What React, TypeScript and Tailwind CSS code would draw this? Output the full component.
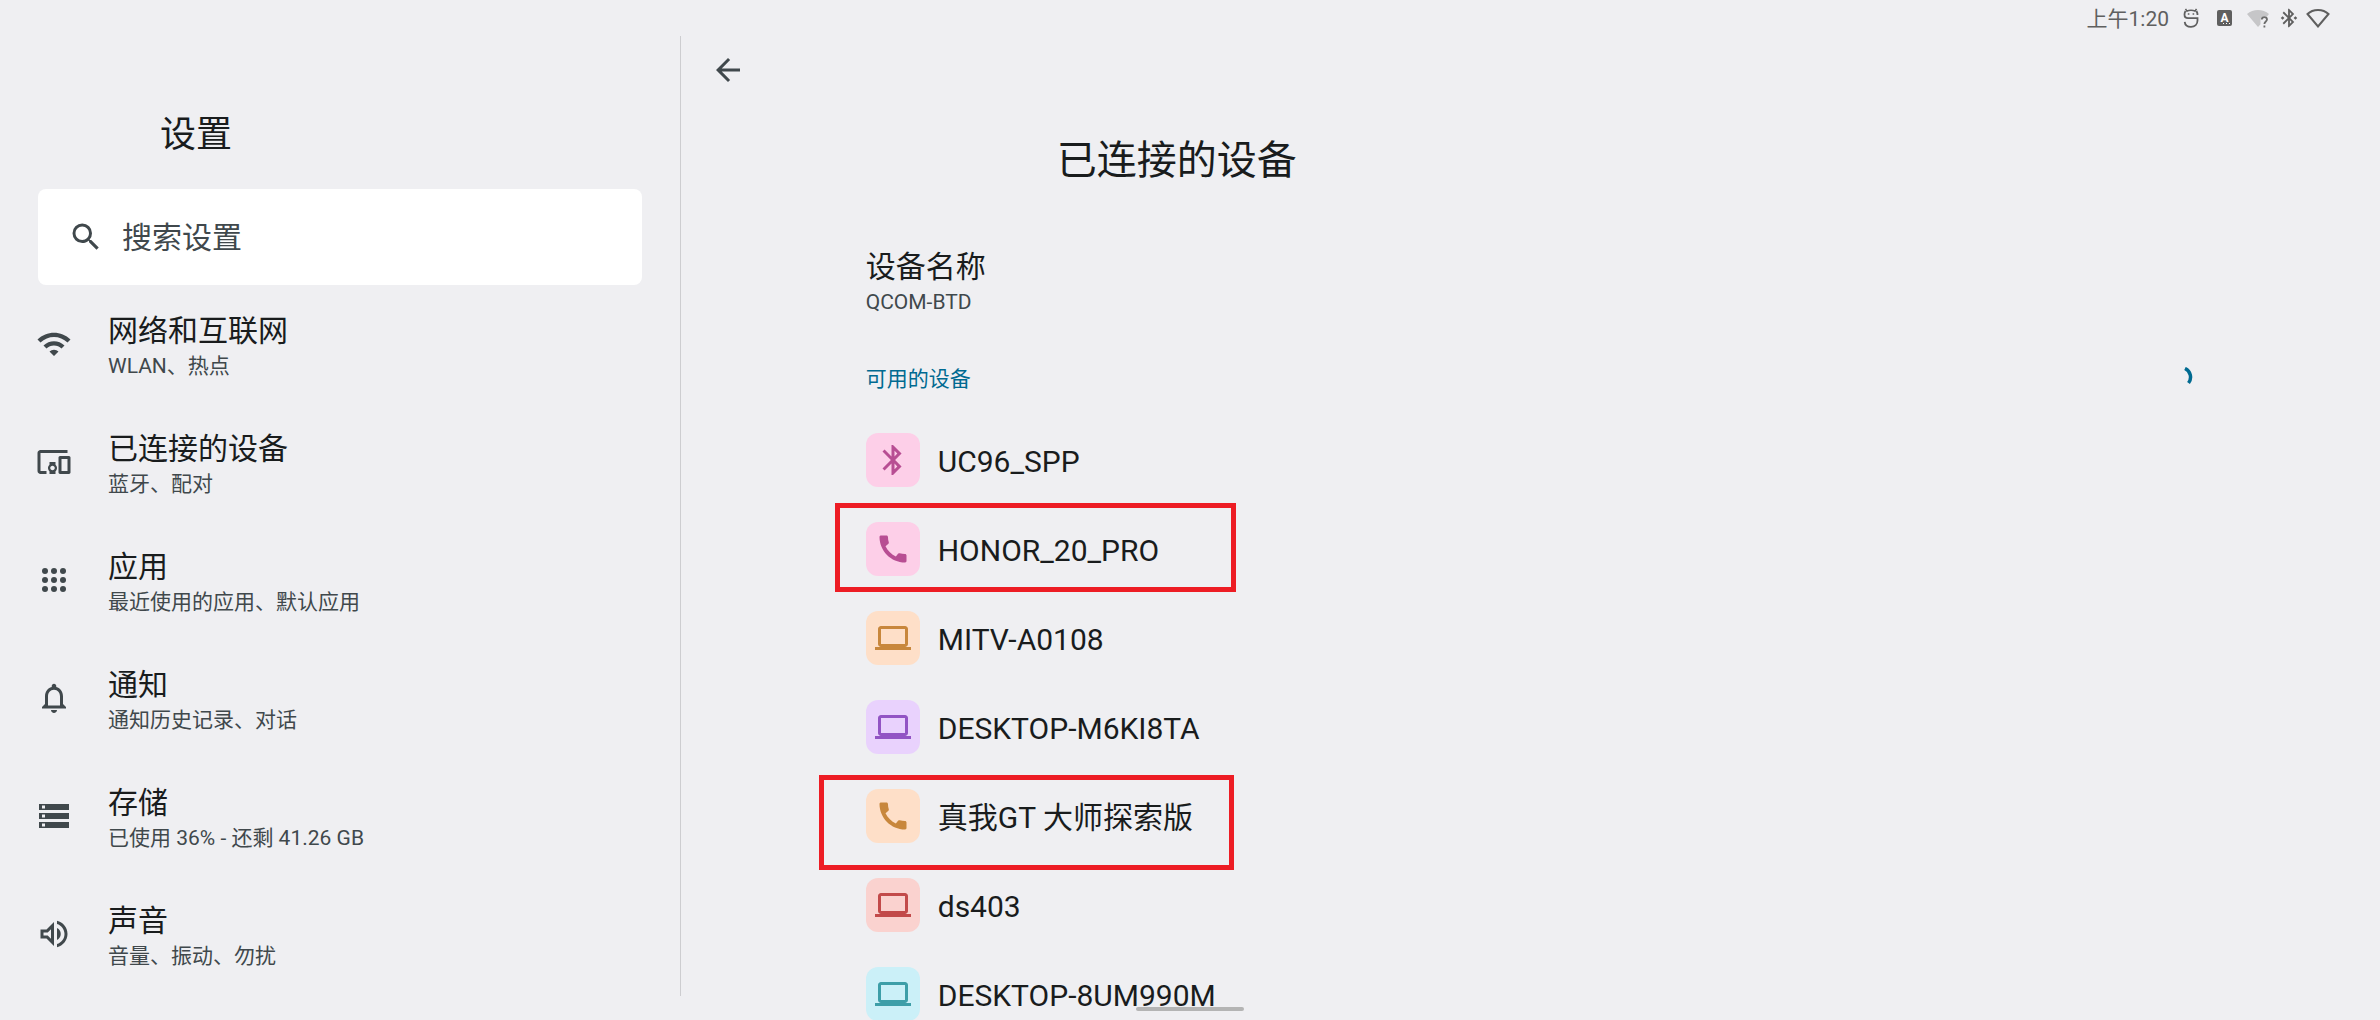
import React from 'react';
import {
  MdArrowBack,
  MdBluetooth,
  MdBluetoothConnected,
  MdCall,
  MdDevicesOther,
  MdNotificationsNone,
  MdOutlineLaptop,
  MdOutlineVolumeUp,
  MdSearch,
  MdStorage,
  MdWifi,
} from 'react-icons/md';

interface SettingItem {
  title: string;
  summary: string;
  icon: React.ReactNode;
  active?: boolean;
}

interface Device {
  name: string;
  icon: React.ReactNode;
  color: string;
  // position and size of the highlight frame, relative to the row
  frame?: string;
}

const AppsIcon = () => (
  <svg viewBox="0 0 24 24" className="size-9" fill="currentColor" aria-hidden="true">
    {[6, 12, 18].map((y) =>
      [6, 12, 18].map((x) => <circle key={`${x}-${y}`} cx={x} cy={y} r="2" />)
    )}
  </svg>
);

const settings: SettingItem[] = [
  { title: '网络和互联网', summary: 'WLAN、热点', icon: <MdWifi className="size-9" /> },
  { title: '已连接的设备', summary: '蓝牙、配对', icon: <MdDevicesOther className="size-9" />, active: true },
  { title: '应用', summary: '最近使用的应用、默认应用', icon: <AppsIcon /> },
  { title: '通知', summary: '通知历史记录、对话', icon: <MdNotificationsNone className="size-9" /> },
  { title: '存储', summary: '已使用 36% - 还剩 41.26 GB', icon: <MdStorage className="size-9" /> },
  { title: '声音', summary: '音量、振动、勿扰', icon: <MdOutlineVolumeUp className="size-9" /> },
];

const laptop = <MdOutlineLaptop className="size-9" />;
const phone = <MdCall className="size-9" />;

const devices: Device[] = [
  { name: 'UC96_SPP', icon: <MdBluetooth className="size-9" />, color: 'bg-[#fdcfe8] text-[#b84e93]' },
  {
    name: 'HONOR_20_PRO',
    icon: phone,
    color: 'bg-[#fdcfe8] text-[#b84e93]',
    frame: '-left-[31px] -top-px h-[89px] w-[401px]',
  },
  { name: 'MITV-A0108', icon: laptop, color: 'bg-[#fedfc8] text-[#c8873c]' },
  { name: 'DESKTOP-M6KI8TA', icon: laptop, color: 'bg-[#e9d2fd] text-[#9254c4]' },
  {
    name: '真我GT 大师探索版',
    icon: phone,
    color: 'bg-[#fedfc8] text-[#c8873c]',
    frame: '-left-[47px] top-1 h-[95px] w-[415px]',
  },
  { name: 'ds403', icon: laptop, color: 'bg-[#fad2cf] text-[#c24a4a]' },
  { name: 'DESKTOP-8UM990M', icon: laptop, color: 'bg-[#cbf0f8] text-[#3d9ea8]' },
];

const StatusBar: React.FC = () => (
  <header className="flex h-9 items-center justify-end pr-[50px] text-[#5f5f5f]">
    <span className="pt-0.5 text-[21px] leading-9">上午1:20</span>
    <svg viewBox="0 0 16 20" className="ml-3.5 h-5 w-4" fill="none" stroke="currentColor" aria-hidden="true">
      <path
        d="M2.500 3C1.800 4.200 1.500 5.500 1.500 6.500c0 2.500 1.500 3.700 3.500 3.700h9.500v2.300c0 3.800-2.700 6.300-6.500 6.300-3.600 0-6-2-6.300-5M13.500 3c.7 1.200 1 2.500 1 4"
        strokeWidth="1.800"
      />
      <path d="M2.500 .8l1.500 2.400c2-1.200 6-1.200 8 0L13.500 .8" strokeWidth="1.500" />
      <path d="M4.800 6h1.600M9.600 6h1.600" strokeWidth="1.600" />
    </svg>
    <div className="relative ml-[18px] flex h-4 w-[15px] items-center justify-center rounded-xs bg-[#5f5f5f] text-xs leading-4 font-bold text-white">
      A
      <svg viewBox="0 0 8 2" className="absolute right-0.5 bottom-px h-0.5 w-2" fill="currentColor" aria-hidden="true">
        <path d="M1 0h1v1H1zM4 0h1v1H4zM7 0h1v1H7z" />
      </svg>
    </div>
    <svg viewBox="0 0 22 19" className="ml-[15px] h-[19px] w-[22px]" aria-hidden="true">
      <path d="M0 5C6-.5 16-.5 22 5l-2 2.600c-4-1.200-6.500.4-6.500 3.400v4.200L11 18z" fill="#c6c6c8" />
      <path
        d="M14.800 10.500c0-3.300 5.200-3.300 5.200 0 0 2-2.600 2-2.600 4.500M17.400 16.500v2"
        fill="none"
        stroke="#6c6c6c"
        strokeWidth="1.800"
      />
    </svg>
    <MdBluetoothConnected className="ml-[9px] size-[22px]" />
    <svg viewBox="0 0 24 20" className="ml-1.5 h-5 w-6" fill="none" stroke="currentColor" strokeWidth="2" aria-hidden="true">
      <path d="M1.500 6C7 .5 17 .5 22.500 6L12 18.500z" />
    </svg>
  </header>
);

const Sidebar: React.FC = () => (
  <aside className="flex-[2] min-w-0">
    <h1 className="mt-[72px] ml-[160px] text-[36px] leading-[54px] text-[#191c1d]">设置</h1>
    <label className="mx-[38px] mt-[27px] flex h-24 items-center gap-[18px] rounded-lg bg-white px-[30px] text-[#40484c]">
      <MdSearch className="size-9 shrink-0" />
      <input
        type="search"
        aria-label="搜索设置"
        placeholder="搜索设置"
        className="w-full min-w-0 bg-transparent text-[30px] outline-none placeholder:text-[#40484c]"
      />
    </label>
    <nav>
      {settings.map((item) => (
        <a
          key={item.title}
          href="#"
          aria-current={item.active ? 'page' : undefined}
          className="flex items-center gap-9 px-9 py-[22px] text-[#40484c]"
        >
          {item.icon}
          <span className="flex flex-col pt-1">
            <span className="text-[30px] leading-10 text-[#191c1d]">{item.title}</span>
            <span className="text-[21px] leading-[30px]">{item.summary}</span>
          </span>
        </a>
      ))}
    </nav>
  </aside>
);

const DeviceRow: React.FC<{ device: Device }> = ({ device }) => (
  <li className="relative">
    <button type="button" className="flex h-[89px] w-full items-center gap-[18px] text-left">
      <span className={`flex size-[54px] items-center justify-center rounded-xl ${device.color}`}>
        {device.icon}
      </span>
      <span className="pt-1 text-[30px] leading-10 text-[#191c1d]">{device.name}</span>
    </button>
    {device.frame && (
      <div className={`absolute border-5 border-[#ed1c24] pointer-events-none ${device.frame}`} />
    )}
  </li>
);

export default function App() {
  return (
    <div
      lang="zh-CN"
      className="relative flex h-screen flex-col overflow-hidden bg-[#efeff2] font-[Roboto,'Noto_Sans_CJK_SC',sans-serif]"
    >
      <StatusBar />
      <div className="flex min-h-0 flex-1">
        <Sidebar />
        <div className="mb-6 w-px bg-[#cdcdd0]" />
        <main className="flex-[5] min-w-0">
          <button type="button" aria-label="返回" className="mt-4 ml-[29px] block text-[#40484c]">
            <MdArrowBack className="size-9" />
          </button>
          <h2 className="mt-[43px] ml-[376px] text-[40px] leading-[60px] text-[#191c1d]">已连接的设备</h2>
          <section className="mr-[184px] ml-[185px] mt-14">
            <div className="text-[30px] leading-10 text-[#191c1d]">设备名称</div>
            <div className="text-[21px] leading-[30px] text-[#40484c]">QCOM-BTD</div>
            <div className="mt-[47px] flex items-center justify-between text-[#006a91]">
              <h3 className="text-[21px] leading-[30px]">可用的设备</h3>
              <svg
                viewBox="0 0 24 24"
                className="size-6"
                fill="none"
                stroke="currentColor"
                strokeWidth="3.500"
                role="progressbar"
                aria-label="可用的设备"
              >
                <path d="M13 1.500a9.500 9.500 0 0 1 3.500 14.500" />
              </svg>
            </div>
            <ul className="mt-[21px]">
              {devices.map((device) => (
                <DeviceRow key={device.name} device={device} />
              ))}
            </ul>
          </section>
        </main>
      </div>
      <div className="absolute bottom-[9px] left-1/2 h-1 w-[108px] -translate-x-1/2 rounded-full bg-[#b4b4b4]" />
    </div>
  );
}
